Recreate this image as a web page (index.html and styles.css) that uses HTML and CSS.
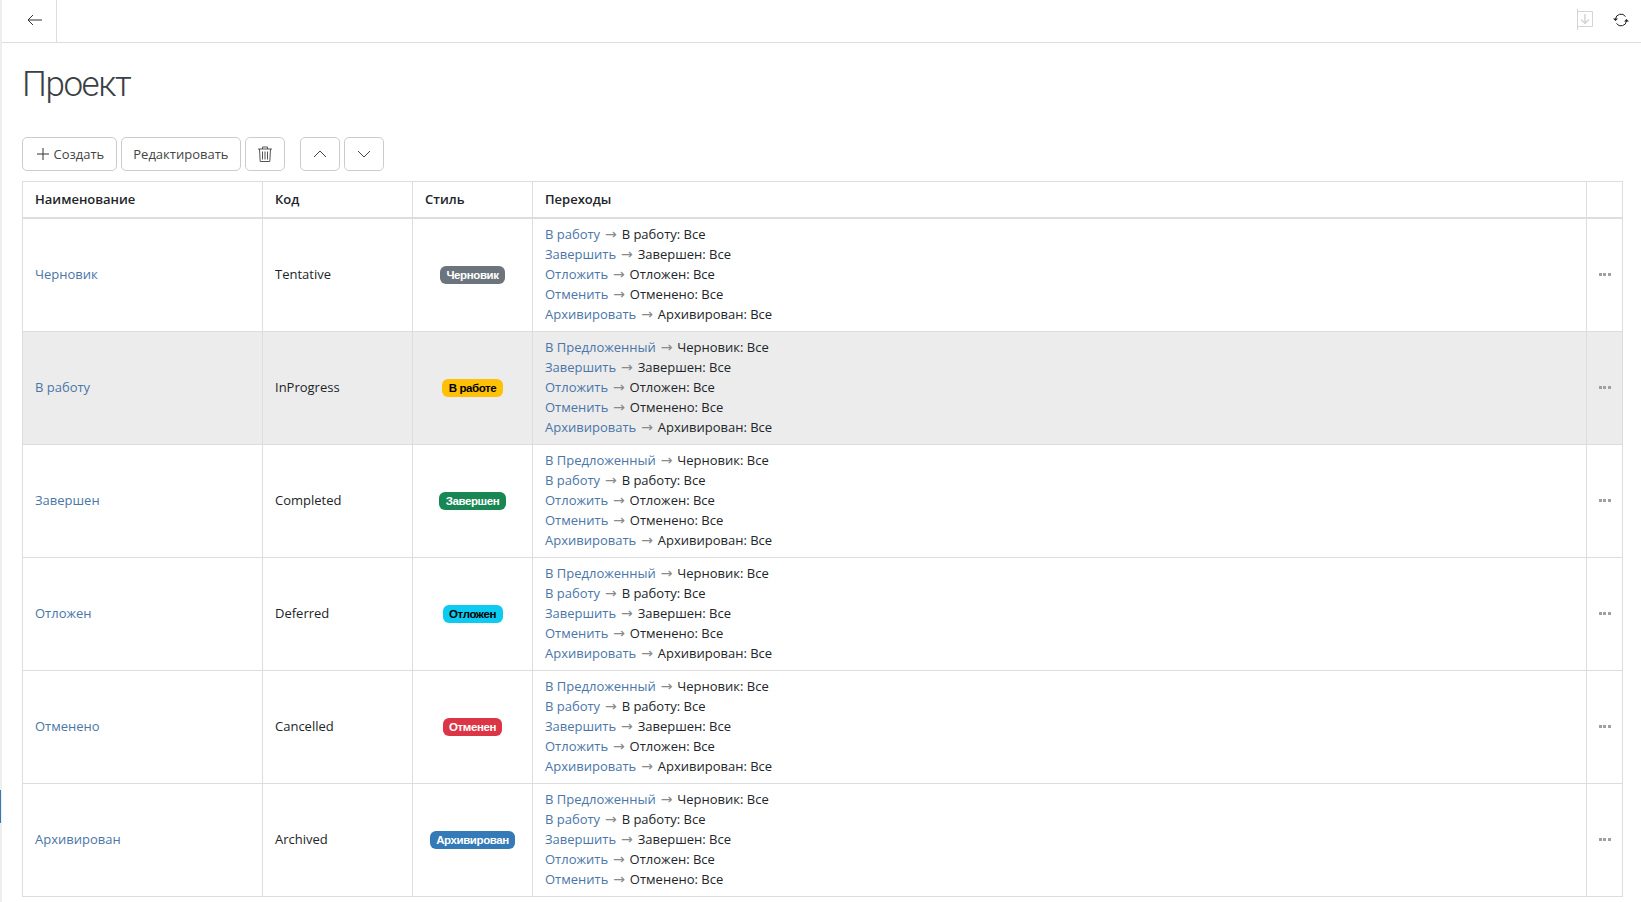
FILE: index.html
```html
<!DOCTYPE html>
<html lang="en">
<head>
    <meta charset="UTF-8">
    <title>Проект</title>
    <link rel="stylesheet" href="styles.css">
</head>
<body>
    <span class="side-marker"></span>
    <header class="topbar">
        <button class="back-button" type="button" aria-label="Назад">
            <svg width="15" height="12" viewBox="0 0 15 12"><path d="M15 6H1M6 1L1 6l5 5" fill="none" stroke="#333" stroke-width="1"/></svg>
        </button>
        <div class="topbar-actions">
            <svg class="export-icon" width="16" height="21" viewBox="0 0 16 21"><path d="M.5 0v21M.5 2.500h15v15H.5" fill="none" stroke="#d4d4d4"/><path d="M8 5v9.500M4 10.500l4 4 4-4" fill="none" stroke="#d4d4d4" stroke-width="1.500"/></svg>
            <svg class="refresh-icon" width="16" height="14" viewBox="0 0 16 14"><path d="M2.500 6a5.500 5.500 0 0 1 10-2.500M13.500 8a5.500 5.500 0 0 1-10 2.500" fill="none" stroke="#222"/><path d="M0 5.500h5L2.500 8zM11 8.500h5L13.500 6z" fill="#222"/></svg>
        </div>
    </header>
    <main class="container">
        <h1>Проект</h1>
        <div class="toolbar">
            <button class="btn" type="button">
                <svg class="plus" width="12" height="12" viewBox="0 0 12 12"><path d="M6 0v12M0 6h12" fill="none" stroke="#333"/></svg>
                Создать
            </button>
            <button class="btn" type="button">Редактировать</button>
            <button class="btn btn-icon" type="button" aria-label="Удалить">
                <svg width="14" height="16" viewBox="0 0 14 16"><path d="M0 3h14M4.500 3V1h5v2M1.500 3l.7 12.500h9.600L12.500 3M4.500 5.500v8M7 5.500v8M9.500 5.500v8" fill="none" stroke="#555"/></svg>
            </button>
            <button class="btn btn-icon btn-gap" type="button" aria-label="Вверх">
                <svg width="14" height="8" viewBox="0 0 14 8"><path d="M1 7l6-6 6 6" fill="none" stroke="#444"/></svg>
            </button>
            <button class="btn btn-icon" type="button" aria-label="Вниз">
                <svg width="14" height="8" viewBox="0 0 14 8"><path d="M1 1l6 6 6-6" fill="none" stroke="#444"/></svg>
            </button>
        </div>
        <table class="states">
            <colgroup>
                <col class="col-name"><col class="col-code"><col class="col-style"><col><col class="col-menu">
            </colgroup>
            <thead>
                <tr><th>Наименование</th><th>Код</th><th>Стиль</th><th>Переходы</th><th></th></tr>
            </thead>
            <tbody>
                <tr>
                    <td><a href="#">Черновик</a></td>
                    <td>Tentative</td>
                    <td class="cell-badge"><span class="badge badge-gray">Черновик</span></td>
                    <td class="transitions">
                        <div><a href="#">В работу</a> <i>→</i> В работу: Все</div>
                        <div><a href="#">Завершить</a> <i>→</i> Завершен: Все</div>
                        <div><a href="#">Отложить</a> <i>→</i> Отложен: Все</div>
                        <div><a href="#">Отменить</a> <i>→</i> Отменено: Все</div>
                        <div><a href="#">Архивировать</a> <i>→</i> Архивирован: Все</div>
                    </td>
                    <td class="cell-menu"><span class="dots"></span></td>
                </tr>
                <tr class="active">
                    <td><a href="#">В работу</a></td>
                    <td>InProgress</td>
                    <td class="cell-badge"><span class="badge badge-yellow">В работе</span></td>
                    <td class="transitions">
                        <div><a href="#">В Предложенный</a> <i>→</i> Черновик: Все</div>
                        <div><a href="#">Завершить</a> <i>→</i> Завершен: Все</div>
                        <div><a href="#">Отложить</a> <i>→</i> Отложен: Все</div>
                        <div><a href="#">Отменить</a> <i>→</i> Отменено: Все</div>
                        <div><a href="#">Архивировать</a> <i>→</i> Архивирован: Все</div>
                    </td>
                    <td class="cell-menu"><span class="dots"></span></td>
                </tr>
                <tr>
                    <td><a href="#">Завершен</a></td>
                    <td>Completed</td>
                    <td class="cell-badge"><span class="badge badge-green">Завершен</span></td>
                    <td class="transitions">
                        <div><a href="#">В Предложенный</a> <i>→</i> Черновик: Все</div>
                        <div><a href="#">В работу</a> <i>→</i> В работу: Все</div>
                        <div><a href="#">Отложить</a> <i>→</i> Отложен: Все</div>
                        <div><a href="#">Отменить</a> <i>→</i> Отменено: Все</div>
                        <div><a href="#">Архивировать</a> <i>→</i> Архивирован: Все</div>
                    </td>
                    <td class="cell-menu"><span class="dots"></span></td>
                </tr>
                <tr>
                    <td><a href="#">Отложен</a></td>
                    <td>Deferred</td>
                    <td class="cell-badge"><span class="badge badge-cyan">Отложен</span></td>
                    <td class="transitions">
                        <div><a href="#">В Предложенный</a> <i>→</i> Черновик: Все</div>
                        <div><a href="#">В работу</a> <i>→</i> В работу: Все</div>
                        <div><a href="#">Завершить</a> <i>→</i> Завершен: Все</div>
                        <div><a href="#">Отменить</a> <i>→</i> Отменено: Все</div>
                        <div><a href="#">Архивировать</a> <i>→</i> Архивирован: Все</div>
                    </td>
                    <td class="cell-menu"><span class="dots"></span></td>
                </tr>
                <tr>
                    <td><a href="#">Отменено</a></td>
                    <td>Cancelled</td>
                    <td class="cell-badge"><span class="badge badge-red">Отменен</span></td>
                    <td class="transitions">
                        <div><a href="#">В Предложенный</a> <i>→</i> Черновик: Все</div>
                        <div><a href="#">В работу</a> <i>→</i> В работу: Все</div>
                        <div><a href="#">Завершить</a> <i>→</i> Завершен: Все</div>
                        <div><a href="#">Отложить</a> <i>→</i> Отложен: Все</div>
                        <div><a href="#">Архивировать</a> <i>→</i> Архивирован: Все</div>
                    </td>
                    <td class="cell-menu"><span class="dots"></span></td>
                </tr>
                <tr>
                    <td><a href="#">Архивирован</a></td>
                    <td>Archived</td>
                    <td class="cell-badge"><span class="badge badge-blue">Архивирован</span></td>
                    <td class="transitions">
                        <div><a href="#">В Предложенный</a> <i>→</i> Черновик: Все</div>
                        <div><a href="#">В работу</a> <i>→</i> В работу: Все</div>
                        <div><a href="#">Завершить</a> <i>→</i> Завершен: Все</div>
                        <div><a href="#">Отложить</a> <i>→</i> Отложен: Все</div>
                        <div><a href="#">Отменить</a> <i>→</i> Отменено: Все</div>
                    </td>
                    <td class="cell-menu"><span class="dots"></span></td>
                </tr>
            </tbody>
        </table>
    </main>
</body>
</html>
```

FILE: styles.css
```css
* {
    box-sizing: border-box;
}

body {
    margin: 0;
    min-height: 100vh;
    font-family: "Open Sans", "Noto Sans", sans-serif;
    font-size: 13px;
    color: #212529;
    background-color: white;
    border-left: 2px solid #eeeeee;
}

/* blue strip on the window edge */
.side-marker {
    position: absolute;
    left: 0;
    top: 790px;
    width: 1px;
    height: 33px;
    background-color: #337ab7;
}

.topbar {
    display: flex;
    align-items: center;
    justify-content: space-between;
    height: 43px;
    border-bottom: 1px solid #dddddd;
}

.back-button {
    display: flex;
    align-items: center;
    justify-content: center;
    width: 55px;
    height: 42px;
    padding: 0 0 3px 11px;
    background: none;
    border: none;
    border-right: 1px solid #dddddd;
}

.topbar-actions {
    display: flex;
    align-items: center;
    gap: 20px;
    padding: 0 12px 3px 0;
}

.container {
    padding: 0 18px 0 20px;
}

h1 {
    margin: 19px 0 0;
    height: 75px;
    font-family: Roboto, "Open Sans", sans-serif;
    font-size: 35px;
    line-height: 46px;
    font-weight: 300;
    letter-spacing: -1.4px;
    color: #3a3f44;
}

.toolbar {
    display: flex;
    gap: 4px;
    height: 44px;
}

.btn {
    display: flex;
    align-items: center;
    justify-content: center;
    height: 34px;
    padding: 0 11.5px;
    font-family: inherit;
    font-size: 13px;
    color: #444444;
    background-color: white;
    border: 1px solid #cccccc;
    border-radius: 5px;
}

.btn-icon {
    width: 40px;
    padding: 0;
}

.btn-gap {
    margin-left: 11px;
}

.plus {
    margin: 0 5px 0 2px;
}

.states {
    width: 1601px;
    table-layout: fixed;
    border-collapse: collapse;
}

.col-name { width: 240px; }
.col-code { width: 150px; }
.col-style { width: 120px; }
.col-menu { width: 36px; }

.states th, .states td {
    padding: 5px 12px 7px;
    border: 1px solid #dddddd;
    text-align: left;
    line-height: 20px;
}

.states th {
    height: 36px;
    padding: 6px 12px;
    font-weight: 600;
    border-bottom: 2px solid #dddddd;
}

.states td {
    height: 113px;
}

.states tr.active td {
    background-color: #ececec;
}

.states a {
    color: #4a76a8;
    text-decoration: none;
}

.transitions i {
    margin: 0 1.5px;
    font-family: "DejaVu Sans", sans-serif;
    font-size: 14px;
    line-height: 1;
    font-style: normal;
    color: #8a8a8a;
}

.states .cell-badge {
    padding: 0 0 2px;
    text-align: center;
}

.badge {
    display: inline-block;
    height: 18px;
    padding: 0 6.5px;
    font-family: "Liberation Sans", Arial, sans-serif;
    font-size: 11.5px;
    line-height: 18px;
    font-weight: bold;
    letter-spacing: -0.4px;
    vertical-align: middle;
    border-radius: 6px;
}

.badge-gray { background-color: #6c757d; color: white; }
.badge-yellow { background-color: #ffc107; color: black; }
.badge-green { background-color: #198754; color: white; }
.badge-cyan { background-color: #0dcaf0; color: black; }
.badge-red { background-color: #dc3545; color: white; }
.badge-blue { background-color: #337ab7; color: white; }

.states .cell-menu {
    padding: 0 0 4px;
    text-align: center;
}

.dots {
    display: inline-block;
    width: 12px;
    height: 3px;
    vertical-align: middle;
    background: linear-gradient(to right, #a0a0a0 3px, transparent 3px 4.5px, #a0a0a0 4.5px 7.5px, transparent 7.5px 9px, #a0a0a0 9px);
}
```
